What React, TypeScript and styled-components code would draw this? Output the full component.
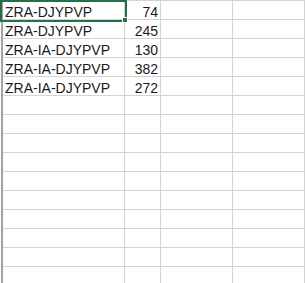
import React from "react";
import styled, { createGlobalStyle } from "styled-components";

type Row = { name: string; qty: number };

const rows: Row[] = [
  { name: "ZRA-DJYPVP", qty: 74 },
  { name: "ZRA-DJYPVP", qty: 245 },
  { name: "ZRA-IA-DJYPVP", qty: 130 },
  { name: "ZRA-IA-DJYPVP", qty: 382 },
  { name: "ZRA-IA-DJYPVP", qty: 272 },
];

const TOTAL_ROWS = 15;
const COLS = 4;

const App = () => {
  const grid: (string | number | null)[][] = [];
  for (let r = 0; r < TOTAL_ROWS; r++) {
    const d = rows[r];
    grid.push([d ? d.name : null, d ? d.qty : null, null, null]);
  }

  return (
    <>
      <GlobalStyle />
      <Sheet>
        {grid.map((line, r) =>
          line.slice(0, COLS).map((val, c) => (
            <Cell key={`${r}-${c}`} $numeric={typeof val === "number"}>
              {val}
              {r === 0 && c === 0 && (
                <Selection>
                  <Handle />
                </Selection>
              )}
            </Cell>
          ))
        )}
      </Sheet>
    </>
  );
};

export default App;

const GlobalStyle = createGlobalStyle`
  html, body {
    margin: 0;
    padding: 0;
    background: #fff;
    overflow: hidden;
  }
`;

const Sheet = styled.div`
  display: grid;
  grid-template-columns: 122px 36px 72px 72px;
  grid-auto-rows: 19px;
  margin-left: 1px;
  border-left: 2px solid #a3a3a3;
  border-top: 1px solid #d4d4d4;
  width: 302px;
  font-family: "Liberation Sans", Arial, sans-serif;
  font-size: 14px;
  color: #1a1a1a;
`;

const Cell = styled.div<{ $numeric: boolean }>`
  position: relative;
  box-sizing: border-box;
  border-right: 1px solid #d4d4d4;
  border-bottom: 1px solid #d4d4d4;
  line-height: 22px;
  white-space: nowrap;
  padding: ${(p) => (p.$numeric ? "0 2px 0 0" : "0 0 0 2px")};
  text-align: ${(p) => (p.$numeric ? "right" : "left")};
`;

const Selection = styled.div`
  position: absolute;
  left: -3px;
  top: -1px;
  width: 127px;
  height: 22px;
  box-sizing: border-box;
  border: 2px solid #217346;
  pointer-events: none;
  z-index: 2;
`;

const Handle = styled.div`
  position: absolute;
  right: -3px;
  bottom: -3px;
  width: 4px;
  height: 4px;
  background: #217346;
  border: 1px solid #fff;
`;
